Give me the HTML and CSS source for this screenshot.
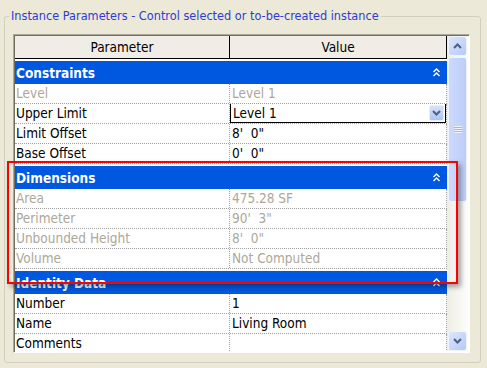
FILE: index.html
```html
<!DOCTYPE html>
<html lang="en">
<head>
    <meta charset="UTF-8">
    <title>Instance Parameters</title>
    <link rel="stylesheet" href="styles.css">
</head>
<body>

    <fieldset class="panel">
        <legend>Instance Parameters - Control selected or to-be-created instance</legend>
        <div class="grid">
            <div class="table">
                <div class="head">
                    <div class="hcell name">Parameter</div>
                    <div class="hcell">Value</div>
                </div>
                <div class="body">
                    <div class="group">
                        <span>Constraints</span>
                        <svg class="fold" width="7" height="9" viewBox="0 0 7 9"><polyline points="0.5,4 3.5,1 6.5,4"/><polyline points="0.5,8 3.5,5 6.5,8"/></svg>
                    </div>
                    <div class="row ro"><div class="cell name">Level</div><div class="cell">Level 1</div></div>
                    <div class="row">
                        <div class="cell name">Upper Limit</div>
                        <div class="cell">
                            <div class="combo">
                                <span>Level 1</span>
                                <span class="drop"><svg width="9" height="6" viewBox="0 0 9 6"><polyline points="1,1 4.5,4.5 8,1"/></svg></span>
                            </div>
                        </div>
                    </div>
                    <div class="row"><div class="cell name">Limit Offset</div><div class="cell">8'&nbsp; 0"</div></div>
                    <div class="row"><div class="cell name">Base Offset</div><div class="cell">0'&nbsp; 0"</div></div>

                    <div class="group">
                        <span>Dimensions</span>
                        <svg class="fold" width="7" height="9" viewBox="0 0 7 9"><polyline points="0.5,4 3.5,1 6.5,4"/><polyline points="0.5,8 3.5,5 6.5,8"/></svg>
                    </div>
                    <div class="row ro"><div class="cell name">Area</div><div class="cell">475.28 SF</div></div>
                    <div class="row ro"><div class="cell name">Perimeter</div><div class="cell">90'&nbsp; 3"</div></div>
                    <div class="row ro"><div class="cell name">Unbounded Height</div><div class="cell">8'&nbsp; 0"</div></div>
                    <div class="row ro"><div class="cell name">Volume</div><div class="cell">Not Computed</div></div>

                    <div class="group">
                        <span>Identity Data</span>
                        <svg class="fold" width="7" height="9" viewBox="0 0 7 9"><polyline points="0.5,4 3.5,1 6.5,4"/><polyline points="0.5,8 3.5,5 6.5,8"/></svg>
                    </div>
                    <div class="row"><div class="cell name">Number</div><div class="cell">1</div></div>
                    <div class="row"><div class="cell name">Name</div><div class="cell">Living Room</div></div>
                    <div class="row"><div class="cell name">Comments</div><div class="cell"></div></div>
                </div>
            </div>

            <div class="scrollbar">
                <div class="sb-btn"><svg width="9" height="6" viewBox="0 0 9 6"><polyline points="1,5 4.5,1.5 8,5"/></svg></div>
                <div class="sb-track">
                    <div class="thumb">
                        <div class="grip"></div>
                    </div>
                </div>
                <div class="sb-btn"><svg width="9" height="6" viewBox="0 0 9 6"><polyline points="1,1 4.5,4.5 8,1"/></svg></div>
            </div>
        </div>
    </fieldset>

    <div class="callout"></div>

</body>
</html>
```

FILE: styles.css
```css
body {
    margin: 0;
    background: #ECE9D8;
    font-family: "DejaVu Sans Condensed", "Liberation Sans", sans-serif;
    font-size: 13.5px;
    color: #000;
    position: relative;
}

.panel {
    margin: 9px 6px 0 4px;
    padding: 11px 10px 9px 8px;
    border: 1px solid #D0D0BF;
    border-radius: 3px;
    min-width: 0;
}

.panel legend {
    padding: 0 2px;
    margin-left: -4px;
    line-height: 14px;
    font-size: 12.6px;
    color: #2E3CD2;
}

.grid {
    display: flex;
    height: 319px;
    box-sizing: border-box;
    padding: 1px;
    border: 1px solid;
    border-color: #ACA899 #FFFFFF #FFFFFF #ACA899;
    box-shadow: inset 1px 1px 0 #716F64;
    background: #FFFFFF;
}

.table {
    width: 432px;
    display: flex;
    flex-direction: column;
    background: #FFFFFF;
    overflow: hidden;
}

.head {
    display: flex;
    height: 22px;
    background: #EFEDE5;
    border-bottom: 1px solid #000;
    border-right: 1px solid #000;
}

.hcell {
    flex: 1;
    display: flex;
    align-items: center;
    justify-content: center;
}

.hcell.name {
    flex: none;
    width: 214px;
    border-right: 1px solid #000;
}

.body {
    flex: 1;
    overflow: hidden;
}

.group {
    height: 23px;
    margin-top: 2px;
    padding: 0 7px 0 1px;
    display: flex;
    align-items: center;
    justify-content: space-between;
    background: #0058E1;
    color: #FFFFFF;
    font-weight: bold;
}

.fold polyline {
    fill: none;
    stroke: #FFFFFF;
    stroke-width: 1.4;
}

.row {
    display: flex;
    height: 19px;
    border-bottom: 1px dotted #A0A0A0;
    border-right: 1px dotted #A0A0A0;
}

.cell {
    flex: 1;
    padding-left: 2px;
    line-height: 19px;
    white-space: nowrap;
    overflow: hidden;
}

.cell.name {
    flex: none;
    width: 213px;
    padding-left: 1px;
    border-right: 1px dotted #A0A0A0;
}

.ro .cell {
    color: #ACA899;
}

.combo {
    height: 20px;
    margin: -1px 0 0 -2px;
    box-sizing: border-box;
    border: 1px solid #000;
    padding-left: 2px;
    display: flex;
    align-items: center;
    justify-content: space-between;
    background: #FFFFFF;
}

.drop {
    width: 15px;
    height: 16px;
    margin-right: 1px;
    border-radius: 2px;
    background: linear-gradient(#D7E2FC, #AFC3F2);
    border: 1px solid #E8EEFC;
    box-sizing: border-box;
    display: flex;
    align-items: center;
    justify-content: center;
}

.drop polyline, .sb-btn polyline {
    fill: none;
    stroke: #4D6185;
    stroke-width: 2;
}

.scrollbar {
    flex: 1;
    display: flex;
    flex-direction: column;
    padding: 0 1px;
    background: linear-gradient(to right, #EEEDE5, #FDFDFA);
}

.sb-btn {
    height: 18px;
    border: 1px solid #F0F4FE;
    border-radius: 3px;
    background: linear-gradient(135deg, #DCE6FD, #B6C9F6);
    display: flex;
    align-items: center;
    justify-content: center;
}

.sb-track {
    flex: 1;
    padding-top: 1px;
}

.thumb {
    height: 143px;
    border: 1px solid #F0F4FE;
    border-radius: 3px;
    background: linear-gradient(to right, #CCDAFC, #BCCDF8);
    display: flex;
    align-items: center;
    justify-content: center;
}

.grip {
    width: 8px;
    height: 7px;
    background: repeating-linear-gradient(#EEF3FF 0 1px, #9DB6EE 1px 2px);
}

.callout {
    position: absolute;
    left: 7px;
    top: 161px;
    width: 451px;
    height: 123px;
    box-sizing: border-box;
    border: 2px solid #FF0000;
    box-shadow: 3px 3px 5px rgba(0, 0, 0, 0.35);
}
```
